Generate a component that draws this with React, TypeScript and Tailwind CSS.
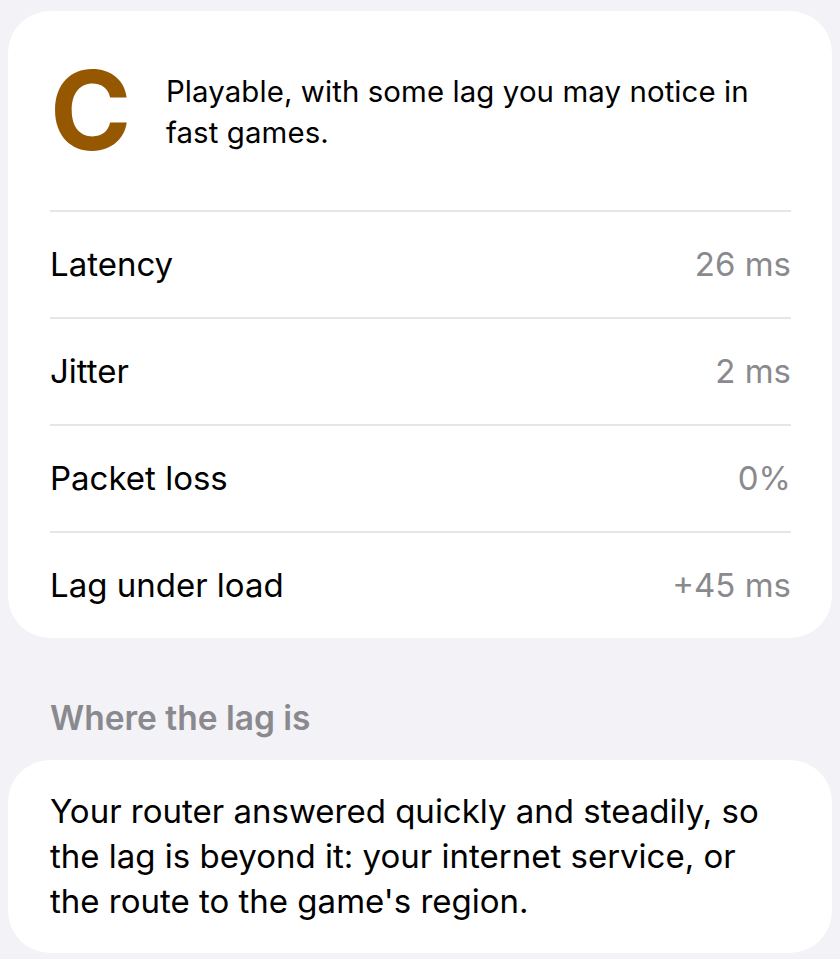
const rows = [
  { label: "Latency", value: "26 ms" },
  { label: "Jitter", value: "2 ms" },
  { label: "Packet loss", value: "0%" },
  { label: "Lag under load", value: "+45 ms" },
];

export default function App() {
  return (
    <div
      className="min-h-[959px] w-[840px] bg-[#f2f2f7] pt-[11px] text-black"
      style={{ fontFamily: "Inter, 'Noto Sans', sans-serif" }}
    >
      <div className="mx-[8px] rounded-[42px] bg-white pl-[42px] pr-[41px]">
        <div className="flex h-[199px] items-center">
          <div className="w-[116px] shrink-0 text-[110px] leading-none font-bold text-[#955700] -mt-[2px]">
            C
          </div>
          <p className="text-[29.4px] leading-[41px] tracking-[0.1px] mt-[2px]">
            Playable, with some lag you may notice in fast games.
          </p>
        </div>
        {rows.map((r) => (
          <div
            key={r.label}
            className="flex h-[107px] items-center justify-between border-t-2 border-[#e5e5ea] text-[33px]"
          >
            <span>{r.label}</span>
            <span className="text-[#8a8a8e]">{r.value}</span>
          </div>
        ))}
      </div>

      <div className="px-[50px] pt-[60px] pb-[22px] text-[33.5px] leading-[40px] font-semibold text-[#8a8a8e]">
        Where the lag is
      </div>

      <div className="mx-[8px] rounded-[42px] bg-white pl-[42px] pr-[41px] pt-[29px] pb-[29px] text-[33px] leading-[45px]">
        Your router answered quickly and steadily, so the lag is beyond it: your internet service, or the route to the game's region.
      </div>
    </div>
  );
}
